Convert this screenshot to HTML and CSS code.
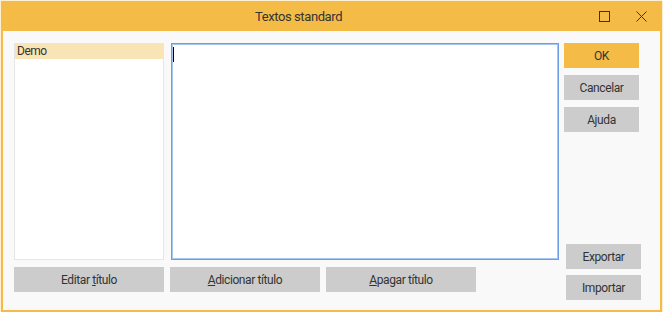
FILE: index.html
```html
<!DOCTYPE html>
<html lang="pt">
<head>
    <meta charset="UTF-8">
    <title>Textos standard</title>
    <link rel="stylesheet" href="styles.css">
</head>
<body>
    <div class="window">
        <div class="titlebar">
            <div class="title">Textos standard</div>
            <div class="caption-btn">
                <svg width="11" height="11" viewBox="0 0 11 11"><rect x="0.5" y="0.5" width="10" height="10" fill="none" stroke="#333" stroke-width="1"/></svg>
            </div>
            <div class="caption-btn">
                <svg width="11" height="11" viewBox="0 0 11 11"><path d="M0.5 0.5 L10.5 10.5 M10.5 0.5 L0.5 10.5" stroke="#333" stroke-width="1"/></svg>
            </div>
        </div>
        <div class="content">
            <div class="left">
                <div class="top-row">
                    <div class="list">
                        <div class="list-item selected">Demo</div>
                    </div>
                    <div class="editor"><span class="caret"></span></div>
                </div>
                <div class="bottom-row">
                    <button class="btn wide">Editar <u>t</u>ítulo</button>
                    <button class="btn wide"><u>A</u>dicionar título</button>
                    <button class="btn wide"><u>A</u>pagar título</button>
                </div>
            </div>
            <div class="right">
                <button class="btn primary">OK</button>
                <button class="btn">Cancelar</button>
                <button class="btn">Ajuda</button>
                <div class="io">
                    <button class="btn">Exportar</button>
                    <button class="btn">Importar</button>
                </div>
            </div>
        </div>
    </div>
</body>
</html>
```

FILE: styles.css
```css
body {
    margin: 0;
    background: #fcefd3;
    font-family: Roboto, "Noto Sans", sans-serif;
    color: #333333;
}
.window {
    margin: 1px 1px 0 1px;
    width: 657px;
    height: 309px;
    border: 2px solid #f4bc47;
    border-top: 0;
    background: #f9f9f9;
    display: flex;
    flex-direction: column;
}
.titlebar {
    height: 30px;
    background: #f4bc47;
    display: flex;
    align-items: center;
}
.title {
    flex: 1;
    text-align: center;
    padding-left: 8px;
    font-size: 13px;
    letter-spacing: -0.4px;
    color: #333;
}
.caption-btn {
    width: 37px;
    height: 30px;
    display: flex;
    align-items: center;
    justify-content: center;
}
.caption-btn svg {
    display: block;
}
.content {
    display: flex;
    padding: 12px 0 0 11px;
}
.left {
    display: flex;
    flex-direction: column;
}
.top-row {
    display: flex;
    gap: 7px;
    height: 217px;
}
.list {
    width: 148px;
    border: 1px solid #e6e6e6;
    background: #ffffff;
}
.list-item {
    height: 15px;
    line-height: 15px;
    padding-left: 2px;
    font-size: 12px;
    letter-spacing: -0.5px;
}
.list-item.selected {
    background: #f9e4b5;
}
.editor {
    width: 385px;
    border: 1px solid #6b9ee6;
    box-shadow: inset 0 0 0 1px #a8c6ef;
    background: #ffffff;
    padding: 3px 0 0 1px;
}
.caret {
    display: block;
    width: 1px;
    height: 15px;
    background: #000;
}
.bottom-row {
    display: flex;
    gap: 6px;
    margin-top: 7px;
}
.btn {
    width: 75px;
    height: 25px;
    border: none;
    padding: 0;
    background: #cccccc;
    color: #333;
    font-family: Roboto, "Noto Sans", sans-serif;
    font-size: 12px;
    letter-spacing: -0.4px;
}
.btn.wide {
    width: 150px;
}
.btn.primary {
    background: #f4bc47;
}
.right {
    display: flex;
    flex-direction: column;
    gap: 7px;
    margin-left: 5px;
}
.io {
    display: flex;
    flex-direction: column;
    gap: 6px;
    margin: 105px 0 0 2px;
}
```
